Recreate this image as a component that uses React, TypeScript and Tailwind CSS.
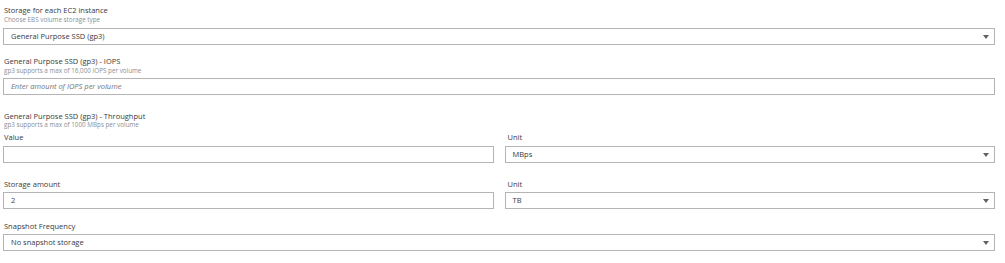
import React from 'react';

const font = { fontFamily: '"Open Sans", "Noto Sans", sans-serif' };

const Caret = () => (
  <svg width="6" height="4" viewBox="0 0 6 4" className="absolute right-[5px] top-[6px]">
    <path d="M0 0 L6 0 L3 4 Z" fill="#5f6368" />
  </svg>
);

const Select: React.FC<{ value: string }> = ({ value }) => (
  <div className="relative h-[17px] border border-[#b4b4b4] bg-white flex items-center pl-[7px] text-[7.5px] text-[#3a3a3a]">
    {value}
    <Caret />
  </div>
);

const Input: React.FC<{ value?: string; placeholder?: string }> = ({ value, placeholder }) => (
  <div className="h-[17px] border border-[#b4b4b4] bg-white flex items-center pl-[7px] text-[7.5px] text-[#3a3a3a]">
    {value ? value : <span className="italic text-[#70767c]">{placeholder}</span>}
  </div>
);

const Label: React.FC<{ children: React.ReactNode }> = ({ children }) => (
  <div className="h-[10px] leading-[10px] pl-[1px] text-[7.5px] text-[#3a3a3a]">{children}</div>
);

const Hint: React.FC<{ children: React.ReactNode }> = ({ children }) => (
  <div className="h-[8px] leading-[8px] pl-[1px] text-[6.3px] text-[#8a8f94]">{children}</div>
);

export default function App() {
  return (
    <div className="w-[1005px] h-[263px] bg-white pl-[3px] pr-[10px] pt-[5px]" style={font}>
      <Label>Storage for each EC2 instance</Label>
      <div className="mt-[1px]">
        <Hint>Choose EBS volume storage type</Hint>
      </div>
      <div className="mt-[4px]">
        <Select value="General Purpose SSD (gp3)" />
      </div>

      <div className="mt-[11px]">
        <Label>General Purpose SSD (gp3) - IOPS</Label>
      </div>
      <div className="mt-[1px]">
        <Hint>gp3 supports a max of 16,000 IOPS per volume</Hint>
      </div>
      <div className="mt-[3px]">
        <Input placeholder="Enter amount of IOPS per volume" />
      </div>

      <div className="mt-[16px]">
        <Label>General Purpose SSD (gp3) - Throughput</Label>
      </div>
      <Hint>gp3 supports a max of 1000 MBps per volume</Hint>
      <div className="mt-[3px] grid grid-cols-2 gap-x-[11px]">
        <div>
          <Label>Value</Label>
          <div className="mt-[4px]">
            <Input />
          </div>
        </div>
        <div>
          <div className="pl-[2px]">
            <Label>Unit</Label>
          </div>
          <div className="mt-[4px]">
            <Select value="MBps" />
          </div>
        </div>
      </div>

      <div className="mt-[16px] grid grid-cols-2 gap-x-[11px]">
        <div>
          <Label>Storage amount</Label>
          <div className="mt-[3px]">
            <Input value="2" />
          </div>
        </div>
        <div>
          <div className="pl-[2px]">
            <Label>Unit</Label>
          </div>
          <div className="mt-[3px]">
            <Select value="TB" />
          </div>
        </div>
      </div>

      <div className="mt-[12px]">
        <Label>Snapshot Frequency</Label>
      </div>
      <div className="mt-[3px]">
        <Select value="No snapshot storage" />
      </div>
    </div>
  );
}
